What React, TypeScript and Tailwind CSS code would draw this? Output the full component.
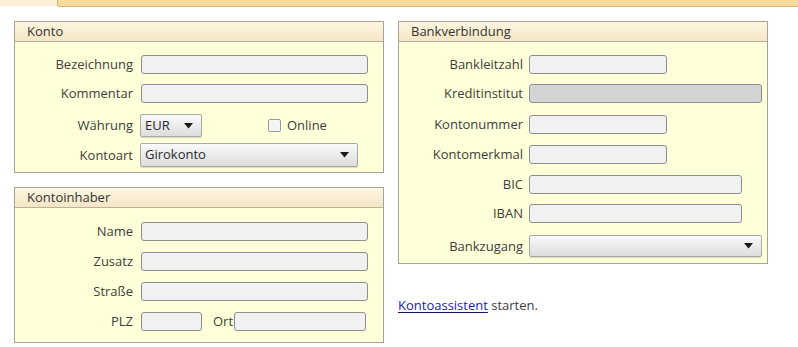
import React from "react";

const font = { fontFamily: '"Open Sans", "Noto Sans", sans-serif' };

function Panel({ title, className, children }: { title: string; className?: string; children: React.ReactNode }) {
  return (
    <div className={"border border-[#a3a39a] bg-[#ffffd9] " + (className ?? "")}>
      <div className="h-[20px] border-b border-[#b8b3a0] bg-gradient-to-b from-[#fdf6e2] to-[#f5e6c3] pl-[12px] flex items-center text-[13px] text-[#333333]">
        {title}
      </div>
      {children}
    </div>
  );
}

function Input({ w, disabled }: { w: number; disabled?: boolean }) {
  return (
    <div
      className={
        "h-[19px] rounded-[3px] border border-[#8e8e8e] " + (disabled ? "bg-[#d4d4d4]" : "bg-[#f1f1f1]")
      }
      style={{ width: w }}
    />
  );
}

function Select({ w, h, value }: { w: number; h: number; value?: string }) {
  return (
    <div
      className="flex items-center justify-between rounded-[2px] border border-[#a9a9a9] bg-gradient-to-b from-[#fafafa] to-[#dddddd] pl-[4px] pr-[8px] text-[13px] text-[#2a2a2a] shadow-[0_1px_1px_rgba(0,0,0,0.15)]"
      style={{ width: w, height: h }}
    >
      <span>{value ?? ""}</span>
      <svg width="9" height="6" viewBox="0 0 9 6">
        <path d="M0 0 H9 L4.5 5.5 Z" fill="#1a1a1a" />
      </svg>
    </div>
  );
}

function Row({
  label,
  lw,
  gap,
  mt,
  children,
}: {
  label: string;
  lw: number;
  gap: number;
  mt: number;
  children: React.ReactNode;
}) {
  return (
    <div className="flex items-center" style={{ marginTop: mt }}>
      <div className="text-right text-[13px] text-[#404040] leading-none" style={{ width: lw, marginRight: gap }}>
        {label}
      </div>
      {children}
    </div>
  );
}

export default function App() {
  return (
    <div className="w-[798px] h-[347px] bg-white overflow-hidden" style={font}>
      <div className="flex h-[7px]">
        <div className="w-[58px] h-[6px] bg-[#fcf1d8] border-r border-[#d2b07a]" />
        <div className="flex-1 h-[7px] bg-[#f9da9d] border-b border-[#d8b879]" />
      </div>
      <div className="flex gap-[14px] pl-[14px] pt-[14px]">
        <div className="flex flex-col w-[370px]">
          <Panel title="Konto" className="h-[152px]">
            <div className="pt-[13px]">
              <Row label="Bezeichnung" lw={118} gap={8} mt={0}>
                <Input w={227} />
              </Row>
              <Row label="Kommentar" lw={118} gap={8} mt={10}>
                <Input w={227} />
              </Row>
              <Row label="Währung" lw={118} gap={7} mt={11}>
                <Select w={62} h={23} value="EUR" />
                <div className="ml-[66px] w-[13px] h-[13px] rounded-[2px] border border-[#9a9a9a] bg-[#f4f4f4]" />
                <span className="ml-[6px] text-[13px] text-[#404040]">Online</span>
              </Row>
              <Row label="Kontoart" lw={118} gap={7} mt={6}>
                <Select w={218} h={24} value="Girokonto" />
              </Row>
            </div>
          </Panel>
          <Panel title="Kontoinhaber" className="mt-[14px] h-[156px]">
            <div className="pt-[14px]">
              <Row label="Name" lw={118} gap={8} mt={0}>
                <Input w={227} />
              </Row>
              <Row label="Zusatz" lw={118} gap={8} mt={11}>
                <Input w={227} />
              </Row>
              <Row label="Straße" lw={118} gap={8} mt={11}>
                <Input w={227} />
              </Row>
              <Row label="PLZ" lw={118} gap={8} mt={11}>
                <Input w={61} />
                <span className="ml-[11px] mr-[1px] text-[13px] text-[#404040]">Ort</span>
                <Input w={132} />
              </Row>
            </div>
          </Panel>
        </div>
        <div className="flex flex-col w-[370px]">
          <Panel title="Bankverbindung" className="h-[243px]">
            <div className="pt-[13px]">
              <Row label="Bankleitzahl" lw={124} gap={6} mt={0}>
                <Input w={138} />
              </Row>
              <Row label="Kreditinstitut" lw={124} gap={6} mt={10}>
                <Input w={233} disabled />
              </Row>
              <Row label="Kontonummer" lw={124} gap={6} mt={12}>
                <Input w={138} />
              </Row>
              <Row label="Kontomerkmal" lw={124} gap={6} mt={11}>
                <Input w={138} />
              </Row>
              <Row label="BIC" lw={124} gap={6} mt={11}>
                <Input w={213} />
              </Row>
              <Row label="IBAN" lw={124} gap={6} mt={10}>
                <Input w={213} />
              </Row>
              <Row label="Bankzugang" lw={124} gap={6} mt={12}>
                <Select w={233} h={22} />
              </Row>
            </div>
          </Panel>
          <div className="mt-[35px] text-[13px] text-[#404040] leading-none">
            <a className="text-[#2323a8] underline decoration-[#14146e] underline-offset-2">Kontoassistent</a> starten.
          </div>
        </div>
      </div>
    </div>
  );
}
